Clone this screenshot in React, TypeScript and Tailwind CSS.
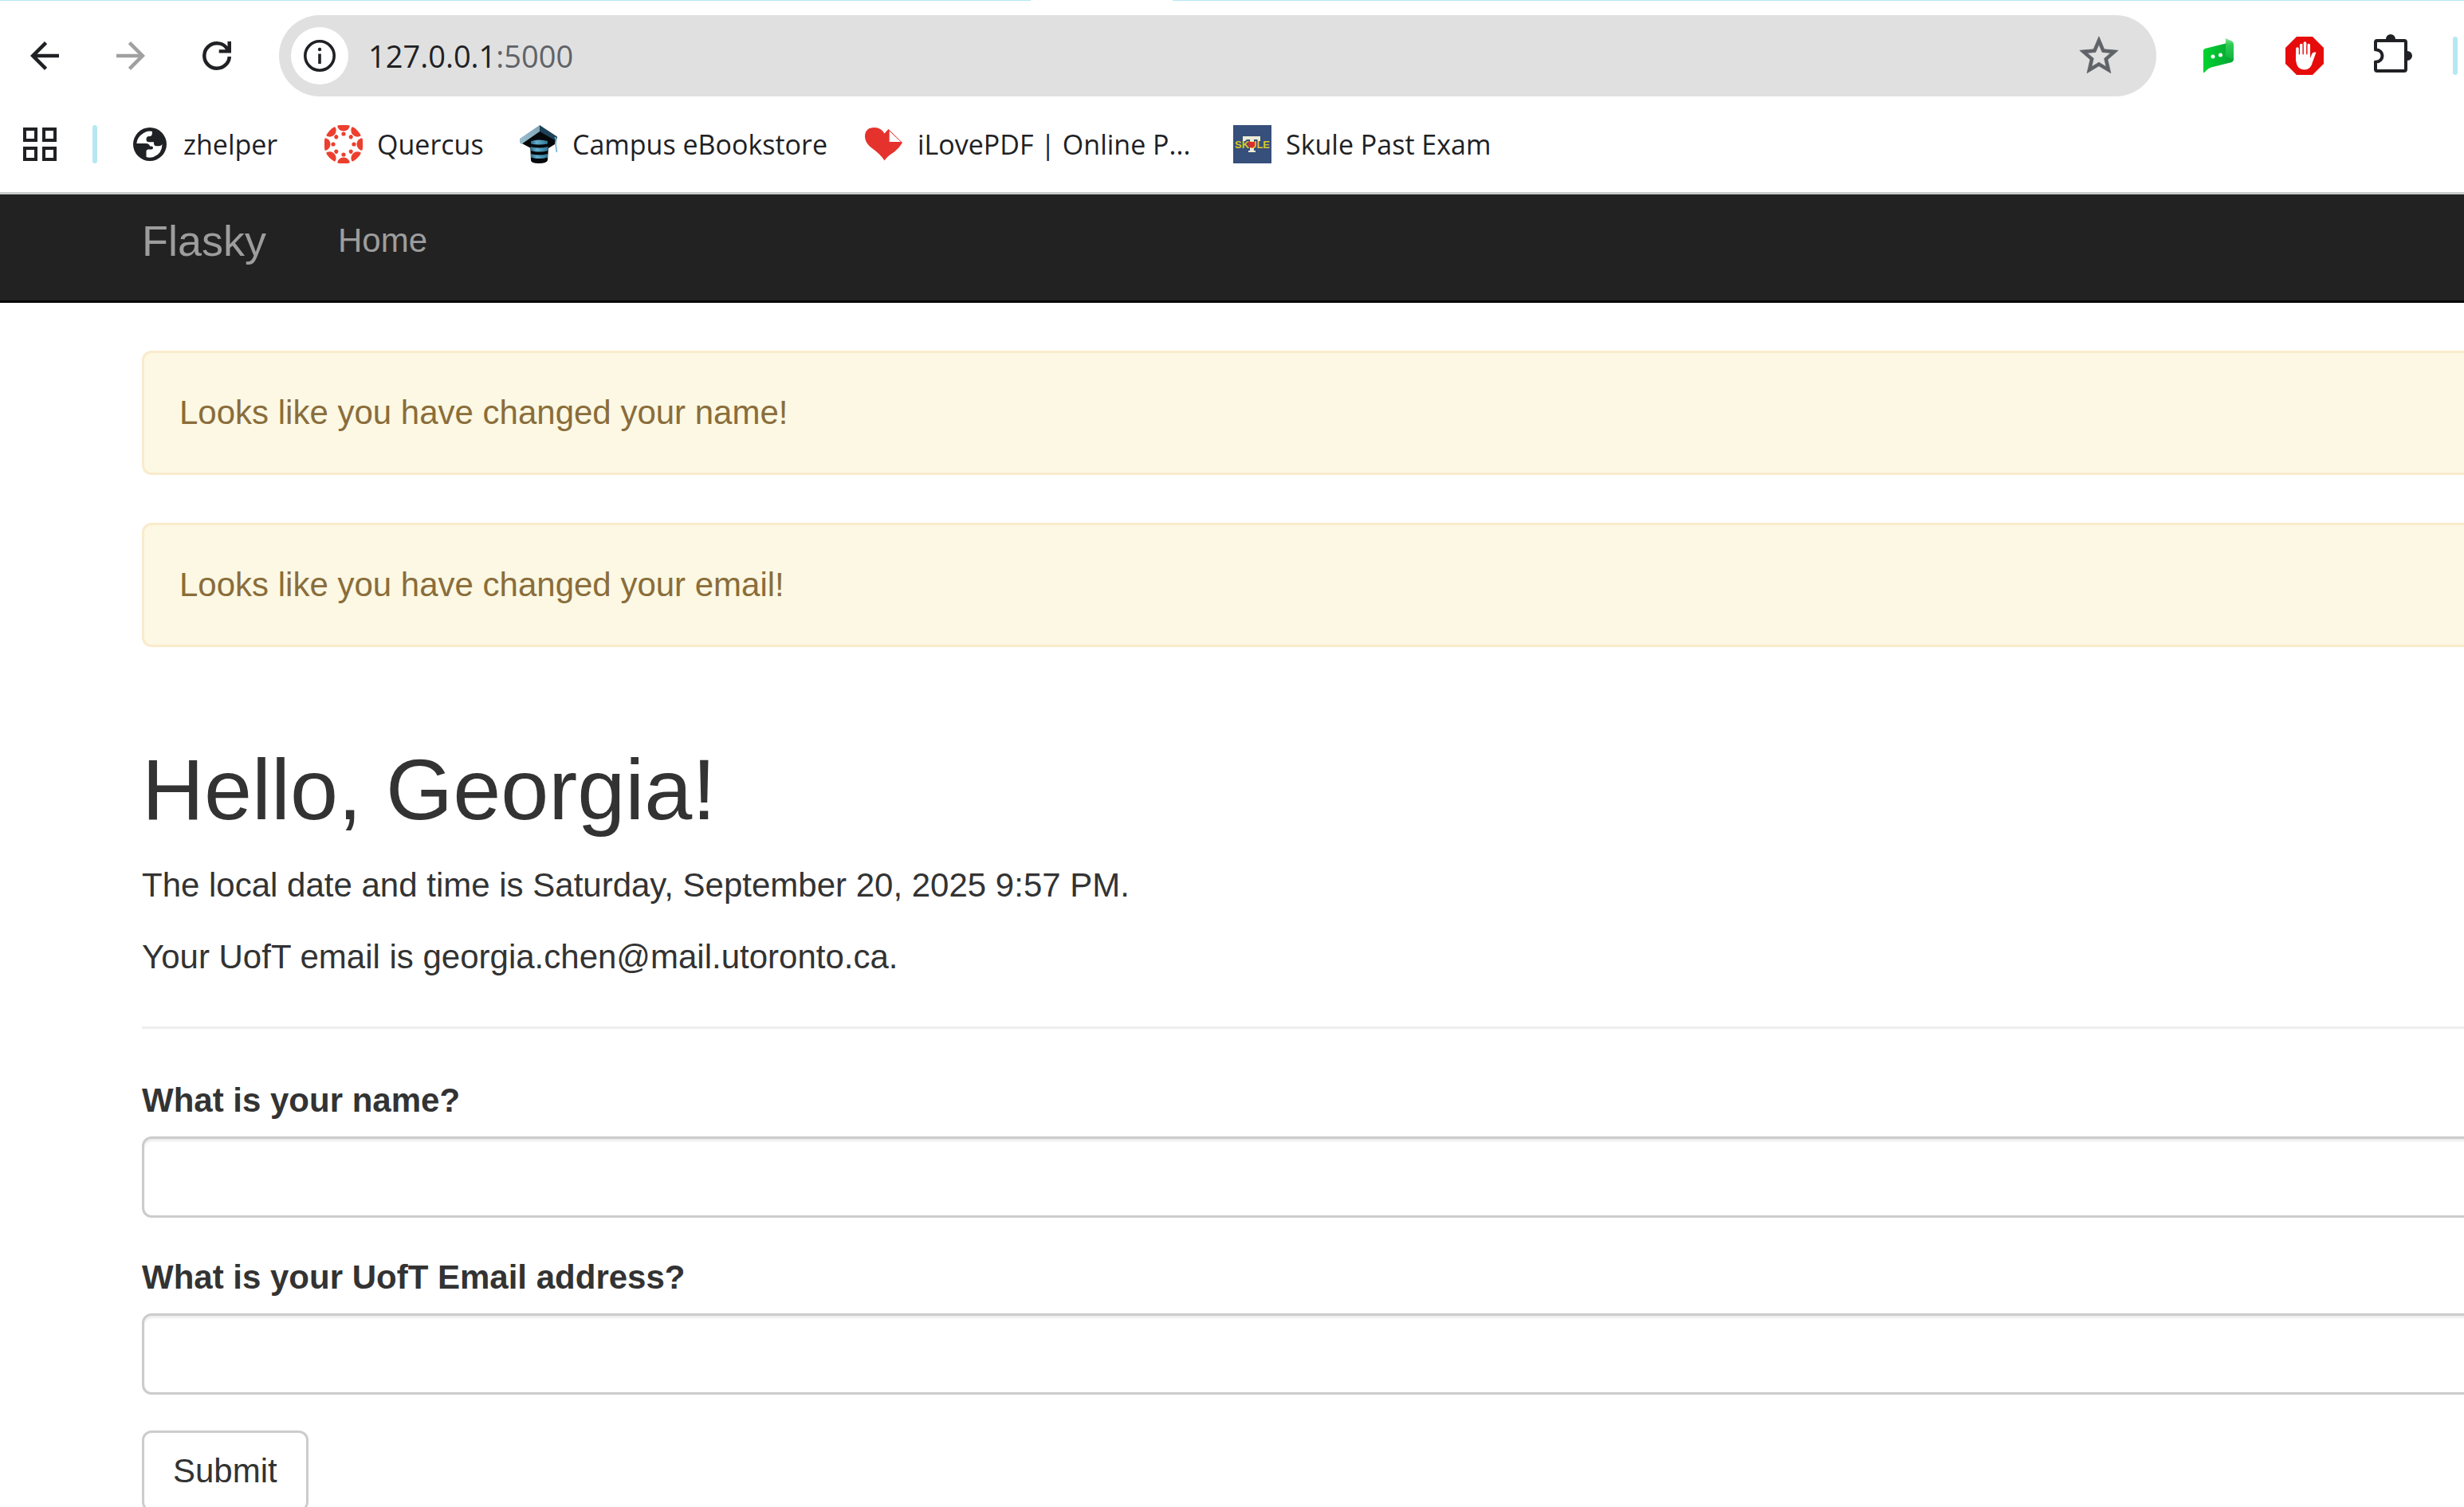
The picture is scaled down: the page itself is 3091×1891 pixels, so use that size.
import type { ReactNode } from "react";

function ArrowIcon({ flipped = false }: { flipped?: boolean }) {
  return (
    <svg viewBox="0 0 24 24" className={flipped ? "size-[54px] -scale-x-100" : "size-[54px]"} fill="currentColor" aria-hidden="true">
      <path d="M20 11H7.83l5.59-5.59L12 4l-8 8 8 8 1.41-1.41L7.83 13H20z" />
    </svg>
  );
}

function ReloadIcon() {
  return (
    <svg viewBox="0 0 24 24" className="size-[54px]" fill="currentColor" aria-hidden="true">
      <path d="M12 20q-3.35 0-5.675-2.325T4 12t2.325-5.675T12 4q1.725 0 3.3.713T18 6.75V4h2v6.4h-6.8V8.5h3.7Q16 7.2 14.8 6.6T12 6Q9.5 6 7.75 7.75T6 12t1.75 4.25T12 18t4.25-1.75T18 12.4h2q0 3-2.325 5.3T12 20" />
    </svg>
  );
}

function InfoIcon() {
  return (
    <svg viewBox="0 0 40 40" className="size-10" aria-hidden="true">
      <circle cx="20" cy="20" r="18.2" fill="none" stroke="#202124" strokeWidth="3.6" />
      <rect x="18.2" y="17.5" width="3.6" height="12.5" fill="#202124" />
      <circle cx="20" cy="12" r="2.2" fill="#202124" />
    </svg>
  );
}

function StarIcon() {
  return (
    <svg viewBox="0 0 24 24" className="size-[58px]" fill="#5f6368" stroke="#5f6368" strokeWidth="0.3" aria-hidden="true">
      <path d="M22 9.24l-7.19-.62L12 2 9.19 8.63 2 9.24l5.46 4.73L5.82 21 12 17.27 18.18 21l-1.63-7.03zM12 15.4l-3.76 2.27 1-4.28-3.32-2.88 4.38-.38L12 6.1l1.71 4.04 4.38.38-3.32 2.88 1 4.28z" />
    </svg>
  );
}

function ChatFlagIcon() {
  return (
    <svg viewBox="0 0 48 48" className="size-12" aria-hidden="true">
      <defs>
        <linearGradient id="flagBody" x1="0" y1="0" x2="1" y2="0">
          <stop offset="0" stopColor="#00d42f" />
          <stop offset="1" stopColor="#07a336" />
        </linearGradient>
        <linearGradient id="flagCurl" x1="0" y1="0" x2="0" y2="1">
          <stop offset="0" stopColor="#8be89b" />
          <stop offset="0.3" stopColor="#2fcb52" />
          <stop offset="1" stopColor="#12b53f" />
        </linearGradient>
      </defs>
      <path d="M5 18q0-2.500 3-3.200L33 8.500 43 12v16q0 3.500-3.500 4.500L15 38.500Q10 40 6.500 45H5z" fill="url(#flagBody)" />
      <path d="M33 2q4 2 7 3 3 1.500 3 5v17q-1 1.500-4 .5l-5-2.500q-1-.5-1-2z" fill="url(#flagCurl)" />
      <circle cx="17" cy="25" r="2.500" fill="#fff" />
      <circle cx="26.500" cy="23" r="2.500" fill="#fff" />
    </svg>
  );
}

function StopHandIcon() {
  return (
    <svg viewBox="0 0 48 48" className="size-12" aria-hidden="true">
      <path d="M14 0h20l14 14v20L34 48H14L0 34V14z" fill="#e60c0c" />
      <g stroke="#fff" strokeWidth="3.700" strokeLinecap="round" fill="none">
        <path d="M15 15v14M19.800 10.500V28M24.500 8v20M29.200 10.500V28" />
      </g>
      <path d="M13.200 22h17.800v5l2.300-5.500q1.200-2.700 5.200-1.700L34 32q-2 9.500-10.500 9.500T13.200 31z" fill="#fff" />
      <path d="M17.400 13v9.500M22.200 10v12.500M26.900 10v12.500" stroke="#e60c0c" strokeWidth="0.900" />
    </svg>
  );
}

function PuzzleIcon() {
  return (
    <svg viewBox="0 0 54 48" className="h-12 w-[54px]" aria-hidden="true">
      <path d="M5 19.500V10q0-2 2-2h34q2 0 2 2v34q0 2-2 2H7q-2 0-2-2v-9.500h1a7.500 7.500 0 0 0 0-15z" fill="none" stroke="#202124" strokeWidth="4" strokeLinejoin="round" />
      <path d="M0 21.600h5a5.400 5.400 0 0 1 0 10.800H0z" fill="#fff" />
      <path d="M18 7.500V6a6 6 0 0 1 12 0v1.500zM43.500 21H45a6 6 0 0 1 0 12h-1.500z" fill="#202124" />
    </svg>
  );
}

function GridIcon() {
  return (
    <svg viewBox="0 0 42 42" className="size-[42px]" fill="none" stroke="#202124" strokeWidth="4" aria-hidden="true">
      <path d="M2 2h14v14H2zM26 2h14v14H26zM2 26h14v14H2zM26 26h14v14H26z" />
    </svg>
  );
}

function GlobeIcon() {
  return (
    <svg viewBox="-3 -3 48 48" className="size-12 shrink-0" aria-hidden="true">
      <circle cx="21" cy="21" r="21" fill="#202124" />
      <path d="M24 5Q19 3.500 13 7 5 12 4.300 20H16q4.500 0 5 3.500h2q2 0 2 2t-2 2h-4q-2.500 0-2.500 3V37q4 1.500 9 0 11-4 11-16.500-1 2.800-4 2.800h-3q-3.500 0-3.500-3.500v-1.600H20q-3.500 0-3.500-3.500t3.500-3.700h1.500Q24 10 24 7z" fill="#fff" />
    </svg>
  );
}

const SPOKES = [0, 45, 90, 135, 180, 225, 270, 315];

function QuercusIcon() {
  return (
    <svg viewBox="0 0 48 48" className="size-12 shrink-0" fill="#ec3f2e" aria-hidden="true">
      <defs>
        <clipPath id="quercusDisc">
          <circle cx="24" cy="24" r="24.500" />
        </clipPath>
      </defs>
      <g clipPath="url(#quercusDisc)">
        {SPOKES.map((a) => (
          <g key={a} transform={`rotate(${a} 24 24)`}>
            <circle cx="24" cy="-0.500" r="8" />
            <circle cx="24" cy="11" r="2.600" />
          </g>
        ))}
      </g>
    </svg>
  );
}

function CapIcon() {
  return (
    <svg viewBox="0 0 48 48" className="size-12 shrink-0" aria-hidden="true">
      <defs>
        <linearGradient id="capBand" x1="0" y1="0" x2="1" y2="0">
          <stop offset="0" stopColor="#2b6580" />
          <stop offset="0.350" stopColor="#62b0d0" />
          <stop offset="1" stopColor="#2f7390" />
        </linearGradient>
        <linearGradient id="capLeft" x1="0" y1="1" x2="1" y2="0">
          <stop offset="0" stopColor="#9cc0d0" />
          <stop offset="1" stopColor="#7ea3b4" />
        </linearGradient>
      </defs>
      <path d="M25 6l20 12-1 6-8 5H14L1 22z" fill="#05090c" />
      <path d="M25 0L0 17v5l2 2L25 8z" fill="url(#capLeft)" />
      <path d="M25 0l22 14.500-1 5.500L25 8z" fill="#1d4257" />
      <path d="M13 20q11-2 23 0v8l-1 16q-1 4-11 4t-10-4z" fill="#05090c" />
      <path d="M14 20q10-3 21 0v3.500q-11 2-21 0zM13.500 27q11 3 22 0v5q-11 3-22 0zM14 36q11 3 21 0v4.500q-10 3-21 0z" fill="url(#capBand)" />
      <path d="M44 15q2.500 3 1 8 .500 5 1.500 11" fill="none" stroke="#6fb3cc" strokeWidth="1.600" />
    </svg>
  );
}

function HeartIcon() {
  return (
    <svg viewBox="0 0 48 48" className="size-12 shrink-0" aria-hidden="true">
      <path d="M24.500 44.500Q20 37 9 29 0 22.500 0 14.500 0 3 12 3q8.500 0 12.500 7.500L29.500 5 47 22Q43 29 37 33.500 28 39 24.500 44.500z" fill="#e5322d" />
      <path d="M30.700 7.500V21H45z" fill="#fff" />
    </svg>
  );
}

function SkuleIcon() {
  return (
    <svg viewBox="0 0 48 48" className="size-12 shrink-0" aria-hidden="true">
      <path d="M0 0h48v48H0z" fill="#364f7b" />
      <path d="M12 14h22v6h-3l-1-2h-4v14h2v2h-9v-2h2V18h-4l-2 2h-3z" fill="#ecebd6" />
      <text x="24" y="29" textAnchor="middle" fontFamily="Liberation Sans, sans-serif" fontWeight="700" fontSize="13" fill="#d9c72a">
        SKULE
      </text>
      <path d="M19 21h8v5q-4 5-8 0z" fill="#e02b2b" />
    </svg>
  );
}

const BOOKMARKS: { label: string; icon: ReactNode; width: string }[] = [
  { label: "zhelper", icon: <GlobeIcon />, width: "w-[243px]" },
  { label: "Quercus", icon: <QuercusIcon />, width: "w-[245px]" },
  { label: "Campus eBookstore", icon: <CapIcon />, width: "w-[433px]" },
  { label: "iLovePDF | Online P...", icon: <HeartIcon />, width: "w-[462px]" },
  { label: "Skule Past Exam", icon: <SkuleIcon />, width: "w-[400px]" },
];

function BrowserChrome() {
  return (
    <header className="border-b-[3px] border-[#c9cacb] bg-white font-['Open_Sans',sans-serif] text-[#202124]">
      <div className="flex h-px bg-[#b5e8f2]">
        <div className="ml-[1293px] w-[178px] bg-white" />
      </div>
      <div className="flex items-center pt-[18px] pr-2 pl-[29px]">
        <div className="flex gap-[54px]">
          <button type="button" aria-label="Back"><ArrowIcon /></button>
          <button type="button" aria-label="Forward" className="text-[#a0a0a1]"><ArrowIcon flipped /></button>
          <button type="button" aria-label="Reload"><ReloadIcon /></button>
        </div>
        <div className="ml-[51px] flex h-[102px] flex-1 items-center rounded-full bg-[#e0e0e0] pr-[43px] pl-[15px]">
          <button type="button" aria-label="View site information" className="flex size-[72px] items-center justify-center rounded-full bg-white">
            <InfoIcon />
          </button>
          <p className="ml-[25px] flex-1 text-[38px] leading-[60px]">
            127.0.0.1<span className="text-[#5f6368]">:5000</span>
          </p>
          <button type="button" aria-label="Bookmark this tab"><StarIcon /></button>
        </div>
        <div className="ml-[54px] flex items-center gap-[60px]">
          <button type="button" aria-label="Chat extension"><ChatFlagIcon /></button>
          <button type="button" aria-label="Ad blocker"><StopHandIcon /></button>
          <button type="button" aria-label="Extensions" className="-mt-1.5"><PuzzleIcon /></button>
        </div>
        <div className="ml-12 h-12 w-1.5 rounded-full bg-[#b5e8f2]" />
      </div>
      <nav aria-label="Bookmarks" className="flex items-center py-9 pl-[29px]">
        <button type="button" aria-label="Tab groups"><GridIcon /></button>
        <div className="ml-[45px] h-12 w-1.5 rounded-full bg-[#b5e8f2]" />
        <ul className="ml-[42px] flex">
          {BOOKMARKS.map(({ label, icon, width }) => (
            <li key={label} className={width}>
              <a href="#" className="flex h-12 items-center gap-[18px] text-[34px] leading-[46px] whitespace-nowrap">
                {icon}
                {label}
              </a>
            </li>
          ))}
        </ul>
      </nav>
    </header>
  );
}

function Alert({ children }: { children: ReactNode }) {
  return (
    <div role="alert" className="mb-[60px] rounded-xl border-[3px] border-[#faebcc] bg-[#fcf8e3] px-11 py-[45px] leading-[60px] text-[#8a6d3b]">
      {children}
    </div>
  );
}

function Field({ id, label, type }: { id: string; label: string; type: string }) {
  return (
    <div className="mb-[45px]">
      <label htmlFor={id} className="mb-[15px] block font-bold">{label}</label>
      <input
        id={id}
        type={type}
        className="block h-[102px] w-full rounded-xl border-[3px] border-[#ccc] bg-white px-9 shadow-[inset_0_3px_3px_rgba(0,0,0,0.075)]"
      />
    </div>
  );
}

export default function App() {
  return (
    <div className="h-screen overflow-hidden bg-white">
      <BrowserChrome />
      <div className="font-['Liberation_Sans',Arial,sans-serif] text-[42px] leading-[60px] text-[#333]">
        <nav aria-label="Main" className="flex items-start gap-[90px] border-b-[3px] border-[#080808] bg-[#222] pt-7 pb-[45px] pl-[178px] text-[#9d9d9d]">
          <a href="#" className="text-[54px]">Flasky</a>
          <a href="#">Home</a>
        </nav>
        <main className="-mr-6 pt-[60px] pl-[178px]">
          <Alert>Looks like you have changed your name!</Alert>
          <Alert>Looks like you have changed your email!</Alert>
          <h1 className="mt-[119px] mb-[31px] text-[108px] leading-[119px]">Hello, Georgia!</h1>
          <p className="mb-[30px]">The local date and time is Saturday, September 20, 2025 9:57 PM.</p>
          <p>Your UofT email is georgia.chen@mail.utoronto.ca.</p>
          <hr className="mt-[57px] mb-[60px] border-t-[3px] border-[#eee]" />
          <form>
            <Field id="name" label="What is your name?" type="text" />
            <Field id="email" label="What is your UofT Email address?" type="email" />
            <button type="submit" className="h-[102px] rounded-xl border-[3px] border-[#ccc] bg-white px-9">Submit</button>
          </form>
        </main>
      </div>
    </div>
  );
}
